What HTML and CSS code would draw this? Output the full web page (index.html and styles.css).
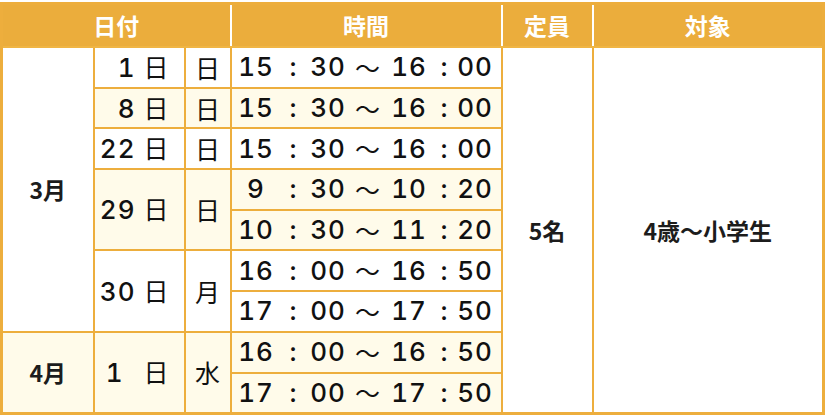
FILE: index.html
```html
<!DOCTYPE html>
<html lang="ja">
<head>
<meta charset="utf-8">
<title>日程表</title>
<link rel="stylesheet" href="styles.css">
</head>
<body>
<table class="sched">
  <colgroup>
    <col class="c-mon"><col class="c-day"><col class="c-wd"><col class="c-tm"><col class="c-cap"><col class="c-tgt">
  </colgroup>
  <thead>
    <tr>
      <th colspan="3">日付</th>
      <th>時間</th>
      <th>定員</th>
      <th>対象</th>
    </tr>
  </thead>
  <tbody>
    <tr class="wh">
      <td rowspan="7" class="mon">3月</td>
      <td class="day"><div class="d"><span class="n">1</span><span class="k">日</span></div></td>
      <td class="wd">日</td>
      <td class="tm"><div class="t"><span>15</span><span>:</span><span>30</span><span class="w">〜</span><span>16</span><span>:</span><span>00</span></div></td>
      <td rowspan="9" class="cap">5名</td>
      <td rowspan="9" class="tgt">4歳〜小学生</td>
    </tr>
    <tr class="cr">
      <td class="day"><div class="d"><span class="n">8</span><span class="k">日</span></div></td>
      <td class="wd">日</td>
      <td class="tm"><div class="t"><span>15</span><span>:</span><span>30</span><span class="w">〜</span><span>16</span><span>:</span><span>00</span></div></td>
    </tr>
    <tr class="wh">
      <td class="day"><div class="d"><span class="n">22</span><span class="k">日</span></div></td>
      <td class="wd">日</td>
      <td class="tm"><div class="t"><span>15</span><span>:</span><span>30</span><span class="w">〜</span><span>16</span><span>:</span><span>00</span></div></td>
    </tr>
    <tr class="cr">
      <td rowspan="2" class="day"><div class="d"><span class="n">29</span><span class="k">日</span></div></td>
      <td rowspan="2" class="wd">日</td>
      <td class="tm"><div class="t"><span>9</span><span>:</span><span>30</span><span class="w">〜</span><span>10</span><span>:</span><span>20</span></div></td>
    </tr>
    <tr class="cr">
      <td class="tm"><div class="t"><span>10</span><span>:</span><span>30</span><span class="w">〜</span><span>11</span><span>:</span><span>20</span></div></td>
    </tr>
    <tr class="wh">
      <td rowspan="2" class="day"><div class="d"><span class="n">30</span><span class="k">日</span></div></td>
      <td rowspan="2" class="wd">月</td>
      <td class="tm"><div class="t"><span>16</span><span>:</span><span>00</span><span class="w">〜</span><span>16</span><span>:</span><span>50</span></div></td>
    </tr>
    <tr class="wh">
      <td class="tm"><div class="t"><span>17</span><span>:</span><span>00</span><span class="w">〜</span><span>17</span><span>:</span><span>50</span></div></td>
    </tr>
    <tr class="cr">
      <td rowspan="2" class="mon">4月</td>
      <td rowspan="2" class="day"><div class="d d-wide"><span class="n">1</span><span class="k">日</span></div></td>
      <td rowspan="2" class="wd">水</td>
      <td class="tm"><div class="t"><span>16</span><span>:</span><span>00</span><span class="w">〜</span><span>16</span><span>:</span><span>50</span></div></td>
    </tr>
    <tr class="cr">
      <td class="tm"><div class="t"><span>17</span><span>:</span><span>00</span><span class="w">〜</span><span>17</span><span>:</span><span>50</span></div></td>
    </tr>
  </tbody>
</table>
</body>
</html>
```
FILE: styles.css
```css
html, body {
  margin: 0;
  background: #ffffff;
}
body {
  padding-top: 2px;
  font-family: Inter, "Noto Sans CJK JP", sans-serif;
  color: #111111;
}

.sched {
  border-collapse: collapse;
  table-layout: fixed;
  width: 825px;
  border: 3px solid #edae3d;
}
.c-mon { width: 92px; }
.c-day { width: 91px; }
.c-wd { width: 46px; }
.c-tm { width: 271px; }
.c-cap { width: 91px; }
.c-tgt { width: 231px; }

.sched th {
  background: #ebad3c;
  color: #ffffff;
  font-family: "Noto Sans CJK JP", sans-serif;
  font-weight: 700;
  font-size: 23px;
  height: 41px;
  padding: 0;
  border-left: 2px solid #ffffff;
  border-bottom: 2px solid #f0b544;
  line-height: 1;
}
.sched th:first-child {
  border-left: 3px solid #edae3d;
}

.sched td {
  border: 2px solid #edae3d;
  padding: 0;
  height: 38.7px;
  vertical-align: middle;
  font-size: 25px;
  line-height: 1;
}
.sched tr.wh td { background: #ffffff; }
.sched tr.cr td { background: #fffbea; }
.sched td.mon,
.sched td.cap,
.sched td.tgt {
  background: #fffbea;
  text-align: center;
  font-family: "Noto Sans CJK JP", sans-serif;
  font-weight: 700;
  font-size: 23px;
  color: #1c1c1c;
}

.sched td.wd {
  text-align: center;
  font-family: "Noto Sans CJK JP", sans-serif;
  font-size: 25px;
}

.d {
  display: flex;
  justify-content: flex-end;
  align-items: baseline;
  padding-right: 15px;
}
.d .n {
  font-variant-numeric: tabular-nums;
  font-weight: 500;
  font-size: 26px;
  letter-spacing: 1px;
}
.d .k {
  margin-left: 8px;
  font-family: "Noto Sans CJK JP", sans-serif;
}
.d-wide .n { margin-right: 12px; }

.t {
  display: grid;
  grid-template-columns: 36px 39px 30px 49px 34px 37px 24px;
  justify-items: center;
  align-items: center;
  padding-left: 6.5px;
  font-variant-numeric: tabular-nums;
  font-weight: 500;
  font-size: 26px;
}
.t span {
  white-space: nowrap;
  letter-spacing: 1px;
}
.t .w {
  font-family: "Noto Sans CJK JP", sans-serif;
  font-weight: 400;
  font-size: 25px;
  letter-spacing: 0;
}
```
